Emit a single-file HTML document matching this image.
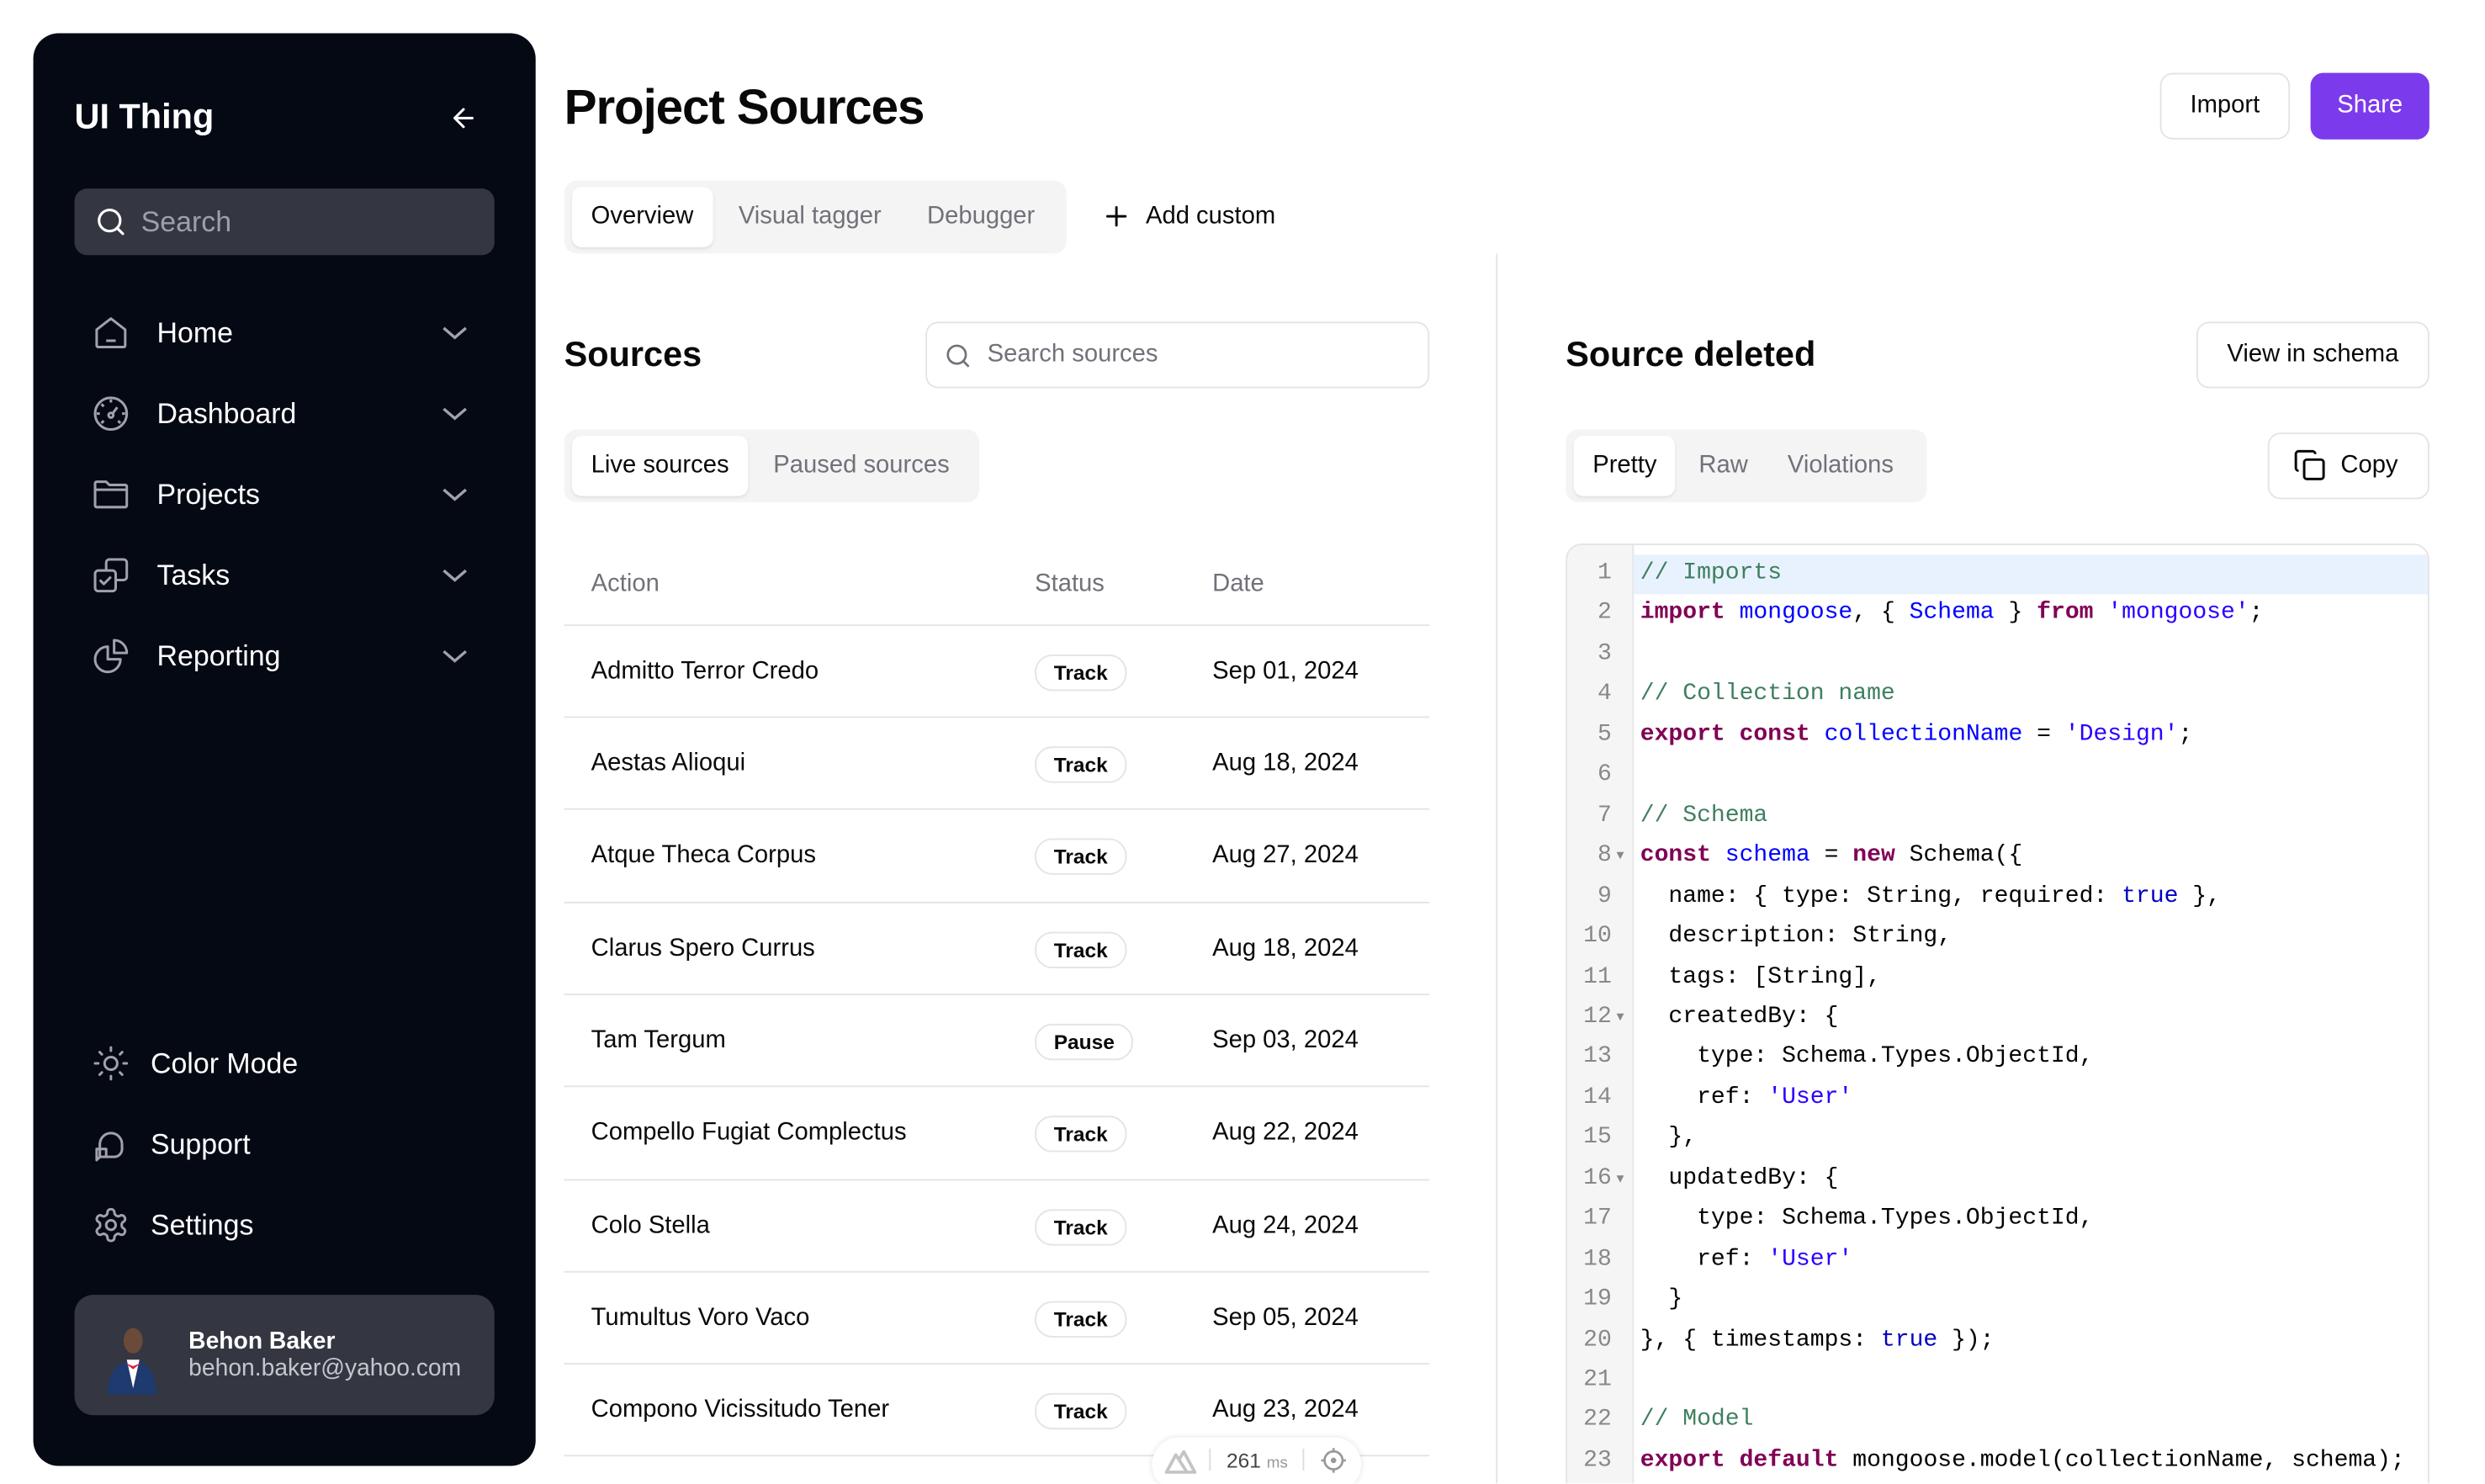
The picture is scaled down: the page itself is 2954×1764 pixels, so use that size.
<!DOCTYPE html>
<html><head><meta charset="utf-8"><style>
*{box-sizing:border-box;margin:0;padding:0}
html,body{width:2954px;height:1764px;overflow:hidden;background:#fff}
#w{position:absolute;left:0;top:0;width:1568px;height:936px;overflow:hidden;transform:scale(1.8838);transform-origin:0 0;font-family:"Liberation Sans",sans-serif;color:#09090b}
.a{position:absolute}
.sb{left:21px;top:21px;width:317px;height:904px;background:#050914;border-radius:16px}
.nav{position:absolute;left:37px;color:#fff;font-size:18px;height:30px;line-height:30px;width:250px}
.nav svg.i{position:absolute;left:0;top:3px}
.nav span{position:absolute;left:41px}
.nav svg.c{position:absolute;left:220px;top:8px}
.tabs{background:#f4f4f5;border-radius:8px;height:46px}
.tab{position:absolute;top:4px;height:38px;line-height:38px;font-size:15.5px;color:#71717a}
.tab.on{background:#fff;color:#09090b;border-radius:6px;box-shadow:0 1px 2px rgba(0,0,0,.08);padding:0 12px;font-weight:500}
.btn{border:1px solid #e4e4e7;border-radius:8px;background:#fff;font-size:15.5px;text-align:center}
.row{position:absolute;left:356px;width:546px;height:58px;border-top:1px solid #e4e4e7;font-size:15.5px}
.row .n{position:absolute;left:17px;top:20px}
.row .b{position:absolute;left:297px;top:18px;border:1px solid #e4e4e7;border-radius:11px;height:23px;line-height:21px;font-size:13px;font-weight:600;padding:0 11px}
.row .d{position:absolute;left:409px;top:20px}
.code{left:988px;top:343px;width:545px;height:620px;border:1px solid #e4e4e7;border-radius:10px;overflow:hidden}
.gut{position:absolute;left:0;top:0;width:42px;height:100%;background:#f5f5f5;border-right:1px solid #e6e6e6}
.ov{font-family:"Liberation Mono","DejaVu Sans Mono",monospace;font-size:14.9px}
.ln{position:absolute;left:0;width:42px;height:25.45px;line-height:25.45px;color:#888;text-align:right;padding-right:13px}
.cl{position:absolute;left:47px;height:25.45px;line-height:25.45px;white-space:pre;color:#000}
.k{color:#800055;font-weight:bold}.v{color:#0000ff}.s{color:#2a00ff}.c{color:#3f7f5f}.t{color:#0000c0}
.fold{position:absolute;left:32px;font-size:8px;color:#888}
</style></head><body><div id="w">
<div class="a sb"></div>
<div class="a" style="left:47px;top:61px;color:#fff;font-size:22px;font-weight:bold">UI Thing</div>
<svg class="a" style="left:283px;top:65px" width="19" height="19" viewBox="0 0 24 24" fill="none" stroke="#fff" stroke-width="2" stroke-linecap="round" stroke-linejoin="round"><path d="M19 12H5M12 19l-7-7 7-7"/></svg>
<div class="a" style="left:47px;top:119px;width:265px;height:42px;background:#343741;border-radius:8px"></div>
<svg class="a" style="left:60px;top:130px" width="20" height="20" viewBox="0 0 24 24" fill="none" stroke="#fff" stroke-width="2" stroke-linecap="round"><circle cx="11" cy="11" r="8"/><path d="M21 21l-4.3-4.3"/></svg>
<div class="a" style="left:89px;top:130px;color:#9ca0a8;font-size:18px">Search</div>

<div class="nav" style="left:58px;top:195px"><svg class="i" width="24" height="24" viewBox="0 0 24 24" fill="none" stroke="#a1a1aa" stroke-width="1.6" stroke-linejoin="round"><path d="M3 10l9-7 9 7v10a1 1 0 0 1-1 1H4a1 1 0 0 1-1-1z"/><path d="M9 17h6"/></svg><span>Home</span><svg class="c" width="18" height="14" viewBox="0 0 18 14" fill="none" stroke="#a1a1aa" stroke-width="1.8"><path d="M2 4l7 6 7-6"/></svg></div>
<div class="nav" style="left:58px;top:246px"><svg class="i" width="24" height="24" viewBox="0 0 24 24" fill="none" stroke="#a1a1aa" stroke-width="1.6"><circle cx="12" cy="12" r="10"/><circle cx="12" cy="13" r="1.5"/><path d="M13 12l3-4M12 3v2M5 12H3M21 12h-2M6 6l1.5 1.5M6 18l1.5-1.5M18 18l-1.5-1.5"/></svg><span>Dashboard</span><svg class="c" width="18" height="14" viewBox="0 0 18 14" fill="none" stroke="#a1a1aa" stroke-width="1.8"><path d="M2 4l7 6 7-6"/></svg></div>
<div class="nav" style="left:58px;top:297px"><svg class="i" width="24" height="24" viewBox="0 0 24 24" fill="none" stroke="#a1a1aa" stroke-width="1.6" stroke-linejoin="round"><path d="M2 5a1 1 0 0 1 1-1h6l2 2h10a1 1 0 0 1 1 1v12a1 1 0 0 1-1 1H3a1 1 0 0 1-1-1z"/><path d="M2 9h20"/></svg><span>Projects</span><svg class="c" width="18" height="14" viewBox="0 0 18 14" fill="none" stroke="#a1a1aa" stroke-width="1.8"><path d="M2 4l7 6 7-6"/></svg></div>
<div class="nav" style="left:58px;top:348px"><svg class="i" width="24" height="24" viewBox="0 0 24 24" fill="none" stroke="#a1a1aa" stroke-width="1.6" stroke-linejoin="round"><rect x="2" y="9" width="13" height="13" rx="2"/><path d="M9 9V4a2 2 0 0 1 2-2h9a2 2 0 0 1 2 2v9a2 2 0 0 1-2 2h-5"/><path d="M5 15l2.5 2.5L12 13"/></svg><span>Tasks</span><svg class="c" width="18" height="14" viewBox="0 0 18 14" fill="none" stroke="#a1a1aa" stroke-width="1.8"><path d="M2 4l7 6 7-6"/></svg></div>
<div class="nav" style="left:58px;top:399px"><svg class="i" width="24" height="24" viewBox="0 0 24 24" fill="none" stroke="#a1a1aa" stroke-width="1.6" stroke-linejoin="round"><path d="M10 6a8 8 0 1 0 8 8h-8z"/><path d="M14 2a8 8 0 0 1 8 8h-8z"/></svg><span>Reporting</span><svg class="c" width="18" height="14" viewBox="0 0 18 14" fill="none" stroke="#a1a1aa" stroke-width="1.8"><path d="M2 4l7 6 7-6"/></svg></div>

<div class="nav" style="left:58px;top:656px"><svg class="i" width="24" height="24" viewBox="0 0 24 24" fill="none" stroke="#a1a1aa" stroke-width="1.6" stroke-linecap="round"><circle cx="12" cy="12" r="4"/><path d="M12 2v2M12 20v2M4.9 4.9l1.4 1.4M17.7 17.7l1.4 1.4M2 12h2M20 12h2M4.9 19.1l1.4-1.4M17.7 6.3l1.4-1.4"/></svg><span style="left:37px">Color Mode</span></div>
<div class="nav" style="left:58px;top:707px"><svg class="i" width="24" height="24" viewBox="0 0 24 24" fill="none" stroke="#a1a1aa" stroke-width="1.6" stroke-linejoin="round"><path d="M5 20v-8a7 7 0 0 1 14 0v3a5 5 0 0 1-5 5H9"/><path d="M3 22l2-2h4v-5H3z"/></svg><span style="left:37px">Support</span></div>
<div class="nav" style="left:58px;top:758px"><svg class="i" width="24" height="24" viewBox="0 0 24 24" fill="none" stroke="#a1a1aa" stroke-width="1.6" stroke-linejoin="round"><path d="M12.2 2h-.4a2 2 0 0 0-2 2v.2a2 2 0 0 1-1 1.7l-.4.3a2 2 0 0 1-2 0l-.2-.1a2 2 0 0 0-2.7.7l-.2.4a2 2 0 0 0 .7 2.7l.2.1a2 2 0 0 1 1 1.7v.5a2 2 0 0 1-1 1.8l-.2.1a2 2 0 0 0-.7 2.7l.2.4a2 2 0 0 0 2.7.7l.2-.1a2 2 0 0 1 2 0l.4.3a2 2 0 0 1 1 1.7v.2a2 2 0 0 0 2 2h.4a2 2 0 0 0 2-2v-.2a2 2 0 0 1 1-1.7l.4-.3a2 2 0 0 1 2 0l.2.1a2 2 0 0 0 2.7-.7l.2-.4a2 2 0 0 0-.7-2.7l-.2-.1a2 2 0 0 1-1-1.8v-.5a2 2 0 0 1 1-1.7l.2-.1a2 2 0 0 0 .7-2.7l-.2-.4a2 2 0 0 0-2.7-.7l-.2.1a2 2 0 0 1-2 0l-.4-.3a2 2 0 0 1-1-1.7V4a2 2 0 0 0-2-2z"/><circle cx="12" cy="12" r="3"/></svg><span style="left:37px">Settings</span></div>

<div class="a" style="left:47px;top:817px;width:265px;height:76px;background:#343741;border-radius:12px"></div>
<svg class="a" style="left:64px;top:834px" width="38" height="46" viewBox="0 0 38 46"><ellipse cx="20" cy="12" rx="6" ry="8" fill="#6b4a3a"/><path d="M4 46q0-20 16-22 14 2 15 22z" fill="#1e3a6e"/><path d="M16 24l4 18 4-18z" fill="#fff"/><path d="M15 26l5 2 5-2-5 4z" fill="#e0203a"/></svg>
<div class="a" style="left:119px;top:838px;color:#fff;font-size:15px;font-weight:bold">Behon Baker</div>
<div class="a" style="left:119px;top:855px;color:#c4c6cc;font-size:15px">behon.baker@yahoo.com</div>

<div class="a" style="left:356px;top:50px;font-size:31px;font-weight:bold;letter-spacing:-.6px">Project Sources</div>
<div class="a btn" style="left:1363px;top:46px;width:82px;height:42px;line-height:40px">Import</div>
<div class="a" style="left:1458px;top:46px;width:75px;height:42px;line-height:42px;background:#7c3aed;color:#fff;border-radius:8px;text-align:center;font-size:15.5px;font-weight:500">Share</div>

<div class="a tabs" style="left:356px;top:114px;width:317px"><div class="tab on" style="left:5px">Overview</div><div class="tab" style="left:110px">Visual tagger</div><div class="tab" style="left:229px">Debugger</div></div>
<svg class="a" style="left:696px;top:128px" width="17" height="17" viewBox="0 0 24 24" fill="none" stroke="#09090b" stroke-width="2.2" stroke-linecap="round"><path d="M12 4v16M4 12h16"/></svg>
<div class="a" style="left:723px;top:128px;font-size:15.5px;font-weight:500">Add custom</div>

<div class="a" style="left:944px;top:160px;width:1px;height:780px;background:#e4e4e7"></div>

<div class="a" style="left:356px;top:211px;font-size:22px;font-weight:bold">Sources</div>
<div class="a btn" style="left:584px;top:203px;width:318px;height:42px"></div>
<svg class="a" style="left:596px;top:216px" width="17" height="17" viewBox="0 0 24 24" fill="none" stroke="#71717a" stroke-width="2" stroke-linecap="round"><circle cx="11" cy="11" r="8"/><path d="M21 21l-4.3-4.3"/></svg>
<div class="a" style="left:623px;top:215px;font-size:15.5px;color:#71717a">Search sources</div>
<div class="a tabs" style="left:356px;top:271px;width:262px"><div class="tab on" style="left:5px">Live sources</div><div class="tab" style="left:132px">Paused sources</div></div>

<div class="a" style="left:373px;top:360px;font-size:15.5px;color:#71717a">Action</div>
<div class="a" style="left:653px;top:360px;font-size:15.5px;color:#71717a">Status</div>
<div class="a" style="left:765px;top:360px;font-size:15.5px;color:#71717a">Date</div>
<div class="row" style="top:394px"><div class="n">Admitto Terror Credo</div><div class="b">Track</div><div class="d">Sep 01, 2024</div></div>
<div class="row" style="top:452px"><div class="n">Aestas Alioqui</div><div class="b">Track</div><div class="d">Aug 18, 2024</div></div>
<div class="row" style="top:510px"><div class="n">Atque Theca Corpus</div><div class="b">Track</div><div class="d">Aug 27, 2024</div></div>
<div class="row" style="top:569px"><div class="n">Clarus Spero Currus</div><div class="b">Track</div><div class="d">Aug 18, 2024</div></div>
<div class="row" style="top:627px"><div class="n">Tam Tergum</div><div class="b">Pause</div><div class="d">Sep 03, 2024</div></div>
<div class="row" style="top:685px"><div class="n">Compello Fugiat Complectus</div><div class="b">Track</div><div class="d">Aug 22, 2024</div></div>
<div class="row" style="top:744px"><div class="n">Colo Stella</div><div class="b">Track</div><div class="d">Aug 24, 2024</div></div>
<div class="row" style="top:802px"><div class="n">Tumultus Voro Vaco</div><div class="b">Track</div><div class="d">Sep 05, 2024</div></div>
<div class="row" style="top:860px"><div class="n">Compono Vicissitudo Tener</div><div class="b">Track</div><div class="d">Aug 23, 2024</div></div>
<div class="row" style="top:918px"></div>

<div class="a" style="left:727px;top:907px;width:132px;height:34px;background:#fff;border-radius:17px;box-shadow:0 0 4px rgba(0,0,0,.12)"></div>
<svg class="a" style="left:735px;top:914px" width="20" height="16" viewBox="0 0 20 16" fill="none" stroke="#c4c4c4" stroke-width="2" stroke-linejoin="round"><path d="M1 15L7 4l7 11zM9 7l3-5 7 13h-5"/></svg>
<div class="a" style="left:763px;top:914px;width:1px;height:14px;background:#ddd"></div>
<div class="a" style="left:774px;top:914px;font-size:13px;color:#444">261 <span style="font-size:10px;color:#999">ms</span></div>
<div class="a" style="left:822px;top:914px;width:1px;height:14px;background:#ddd"></div>
<svg class="a" style="left:833px;top:913px" width="17" height="17" viewBox="0 0 24 24" fill="none" stroke="#999" stroke-width="2"><circle cx="12" cy="12" r="8"/><circle cx="12" cy="12" r="1.5" fill="#999"/><path d="M12 1v4M12 19v4M1 12h4M19 12h4"/></svg>

<div class="a" style="left:988px;top:211px;font-size:22px;font-weight:bold">Source deleted</div>
<div class="a btn" style="left:1386px;top:203px;width:147px;height:42px;line-height:40px">View in schema</div>
<div class="a tabs" style="left:988px;top:271px;width:228px"><div class="tab on" style="left:5px">Pretty</div><div class="tab" style="left:84px">Raw</div><div class="tab" style="left:140px">Violations</div></div>
<div class="a btn" style="left:1431px;top:273px;width:102px;height:42px"></div>
<svg class="a" style="left:1447px;top:283px" width="21" height="21" viewBox="0 0 24 24" fill="none" stroke="#09090b" stroke-width="1.8" stroke-linejoin="round"><rect x="8" y="8" width="14" height="14" rx="2"/><path d="M4 16a2 2 0 0 1-2-2V4a2 2 0 0 1 2-2h10a2 2 0 0 1 2 2"/></svg>
<div class="a" style="left:1477px;top:285px;font-size:15.5px;font-weight:500">Copy</div>

<div class="a code">
<div class="gut"></div>
<div class="a" style="left:42px;top:6px;width:510px;height:25.45px;background:#e8f2fe"></div>
</div>
<div class="a ov" style="left:988px;top:346px;width:545px;height:600px">
<div class="ln" style="top:4px">1</div><div class="cl" style="top:4px"><span class="c">// Imports</span></div>
<div class="ln" style="top:29.45px">2</div><div class="cl" style="top:29.45px"><span class="k">import</span> <span class="v">mongoose</span>, { <span class="v">Schema</span> } <span class="k">from</span> <span class="s">'mongoose'</span>;</div>
<div class="ln" style="top:54.9px">3</div>
<div class="ln" style="top:80.35px">4</div><div class="cl" style="top:80.35px"><span class="c">// Collection name</span></div>
<div class="ln" style="top:105.8px">5</div><div class="cl" style="top:105.8px"><span class="k">export</span> <span class="k">const</span> <span class="v">collectionName</span> = <span class="s">'Design'</span>;</div>
<div class="ln" style="top:131.25px">6</div>
<div class="ln" style="top:156.7px">7</div><div class="cl" style="top:156.7px"><span class="c">// Schema</span></div>
<div class="ln" style="top:182.15px">8</div><span class="fold" style="top:190px">▼</span><div class="cl" style="top:182.15px"><span class="k">const</span> <span class="v">schema</span> = <span class="k">new</span> Schema({</div>
<div class="ln" style="top:207.6px">9</div><div class="cl" style="top:207.6px">  name: { type: String, required: <span class="t">true</span> },</div>
<div class="ln" style="top:233.05px">10</div><div class="cl" style="top:233.05px">  description: String,</div>
<div class="ln" style="top:258.5px">11</div><div class="cl" style="top:258.5px">  tags: [String],</div>
<div class="ln" style="top:283.95px">12</div><span class="fold" style="top:292px">▼</span><div class="cl" style="top:283.95px">  createdBy: {</div>
<div class="ln" style="top:309.4px">13</div><div class="cl" style="top:309.4px">    type: Schema.Types.ObjectId,</div>
<div class="ln" style="top:334.85px">14</div><div class="cl" style="top:334.85px">    ref: <span class="s">'User'</span></div>
<div class="ln" style="top:360.3px">15</div><div class="cl" style="top:360.3px">  },</div>
<div class="ln" style="top:385.75px">16</div><span class="fold" style="top:394px">▼</span><div class="cl" style="top:385.75px">  updatedBy: {</div>
<div class="ln" style="top:411.2px">17</div><div class="cl" style="top:411.2px">    type: Schema.Types.ObjectId,</div>
<div class="ln" style="top:436.65px">18</div><div class="cl" style="top:436.65px">    ref: <span class="s">'User'</span></div>
<div class="ln" style="top:462.1px">19</div><div class="cl" style="top:462.1px">  }</div>
<div class="ln" style="top:487.55px">20</div><div class="cl" style="top:487.55px">}, { timestamps: <span class="t">true</span> });</div>
<div class="ln" style="top:513px">21</div>
<div class="ln" style="top:538.45px">22</div><div class="cl" style="top:538.45px"><span class="c">// Model</span></div>
<div class="ln" style="top:563.9px">23</div><div class="cl" style="top:563.9px"><span class="k">export</span> <span class="k">default</span> mongoose.model(collectionName, schema);</div>
</div>
</div></body></html>
